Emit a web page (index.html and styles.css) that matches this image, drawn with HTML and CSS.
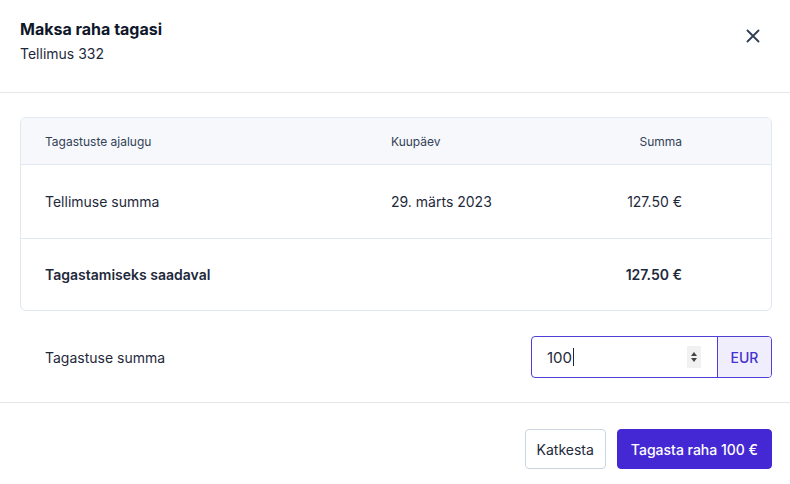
FILE: index.html
```html
<!DOCTYPE html>
<html lang="et">
<head>
<meta charset="utf-8">
<link rel="stylesheet" href="styles.css">
</head>
<body>
<div class="modal">
  <header class="head">
    <div class="titles">
      <h1 class="title">Maksa raha tagasi</h1>
      <p class="subtitle">Tellimus 332</p>
    </div>
    <button class="close" aria-label="Sulge">
      <svg width="14" height="14" viewBox="0 0 14 14"><path d="M1.5 1.5L12.5 12.5M12.5 1.5L1.5 12.5" stroke="#334155" stroke-width="1.9" stroke-linecap="round"/></svg>
    </button>
  </header>
  <section class="body">
    <div class="table">
      <div class="row thead">
        <span>Tagastuste ajalugu</span>
        <span>Kuupäev</span>
        <span class="num">Summa</span>
      </div>
      <div class="row">
        <span>Tellimuse summa</span>
        <span>29. märts 2023</span>
        <span class="num">127.50 €</span>
      </div>
      <div class="row strong">
        <span>Tagastamiseks saadaval</span>
        <span></span>
        <span class="num">127.50 €</span>
      </div>
    </div>
    <div class="refund">
      <label class="refund-label">Tagastuse summa</label>
      <div class="group">
        <div class="field">
          <span class="value">100<span class="caret"></span></span>
          <span class="spin">
            <svg width="8" height="14" viewBox="0 0 8 14"><path d="M4 2L7 6H1Z" fill="#444"/><path d="M4 12L7 8H1Z" fill="#444"/></svg>
          </span>
        </div>
        <span class="addon">EUR</span>
      </div>
    </div>
  </section>
  <footer class="foot">
    <button class="btn secondary">Katkesta</button>
    <button class="btn primary">Tagasta raha 100 €</button>
  </footer>
</div>
</body>
</html>
```
FILE: styles.css
```css
* { box-sizing: border-box; }
html, body { margin: 0; padding: 0; background: #fff; }
body {
  font-family: "Inter", "Liberation Sans", sans-serif;
  color: #1e293b;
  width: 790px;
  height: 484px;
  overflow: hidden;
}
.modal { display: flex; flex-direction: column; }
.head {
  display: flex;
  justify-content: space-between;
  align-items: flex-start;
  padding: 17px 20px 0 20px;
  height: 93px;
  border-bottom: 1px solid #e5e7eb;
}
.title {
  margin: 0;
  font-size: 16px;
  font-weight: 700;
  line-height: 24px;
  color: #0f172a;
}
.subtitle {
  margin: 3px 0 0;
  font-size: 14px;
  line-height: 20px;
  color: #1e293b;
}
.close {
  border: 0;
  background: none;
  padding: 0;
  margin: 12px 10px 0 0;
  width: 14px;
  height: 14px;
  display: flex;
}
.body { padding: 24px 18px 24px 20px; border-bottom: 1px solid #e5e7eb; }
.table {
  border: 1px solid #e2e8f0;
  border-radius: 6px;
  overflow: hidden;
}
.row {
  display: grid;
  grid-template-columns: 346px 161px 130px;
  align-items: center;
  padding-left: 24px;
  height: 74px;
  font-size: 14px;
  border-top: 1px solid #e2e8f0;
}
.row:first-child { border-top: 0; }
.thead {
  height: 46px;
  background: #f6f8fc;
  font-size: 12px;
  color: #334155;
}
.strong { font-weight: 600; height: 72px; }
.num { text-align: right; }
.refund {
  display: flex;
  justify-content: space-between;
  align-items: center;
  padding: 25px 0 0 25px;
}
.refund-label { font-size: 14px; color: #1e293b; }
.group {
  display: flex;
  height: 42px;
  border: 1px solid #4f3fd4;
  border-radius: 4px;
  overflow: hidden;
}
.field {
  width: 186px;
  display: flex;
  align-items: center;
  justify-content: space-between;
  padding: 0 16px 0 15px;
  font-size: 15px;
  border-right: 1px solid #4f3fd4;
}
.value { display: flex; align-items: center; }
.caret {
  display: inline-block;
  width: 1px;
  height: 18px;
  background: #1e293b;
  margin-left: 1px;
}
.spin {
  width: 14px;
  height: 22px;
  background: #f1f1f1;
  display: flex;
  align-items: center;
  justify-content: center;
}
.addon {
  width: 53px;
  background: #f0eefd;
  color: #4531d0;
  font-size: 14px;
  font-weight: 500;
  display: flex;
  align-items: center;
  justify-content: center;
}
.foot {
  display: flex;
  justify-content: flex-end;
  gap: 11px;
  padding: 26px 18px 0 0;
}
.btn {
  font-family: inherit;
  font-size: 14px;
  height: 40px;
  border-radius: 4px;
  padding: 0 11px;
  cursor: pointer;
}
.secondary {
  background: #fff;
  color: #1e293b;
  border: 1px solid #cbd5e1;
}
.primary {
  background: #4328d4;
  color: #fff;
  border: 1px solid #4328d4;
  font-weight: 500;
  padding: 0 13px;
}
```
